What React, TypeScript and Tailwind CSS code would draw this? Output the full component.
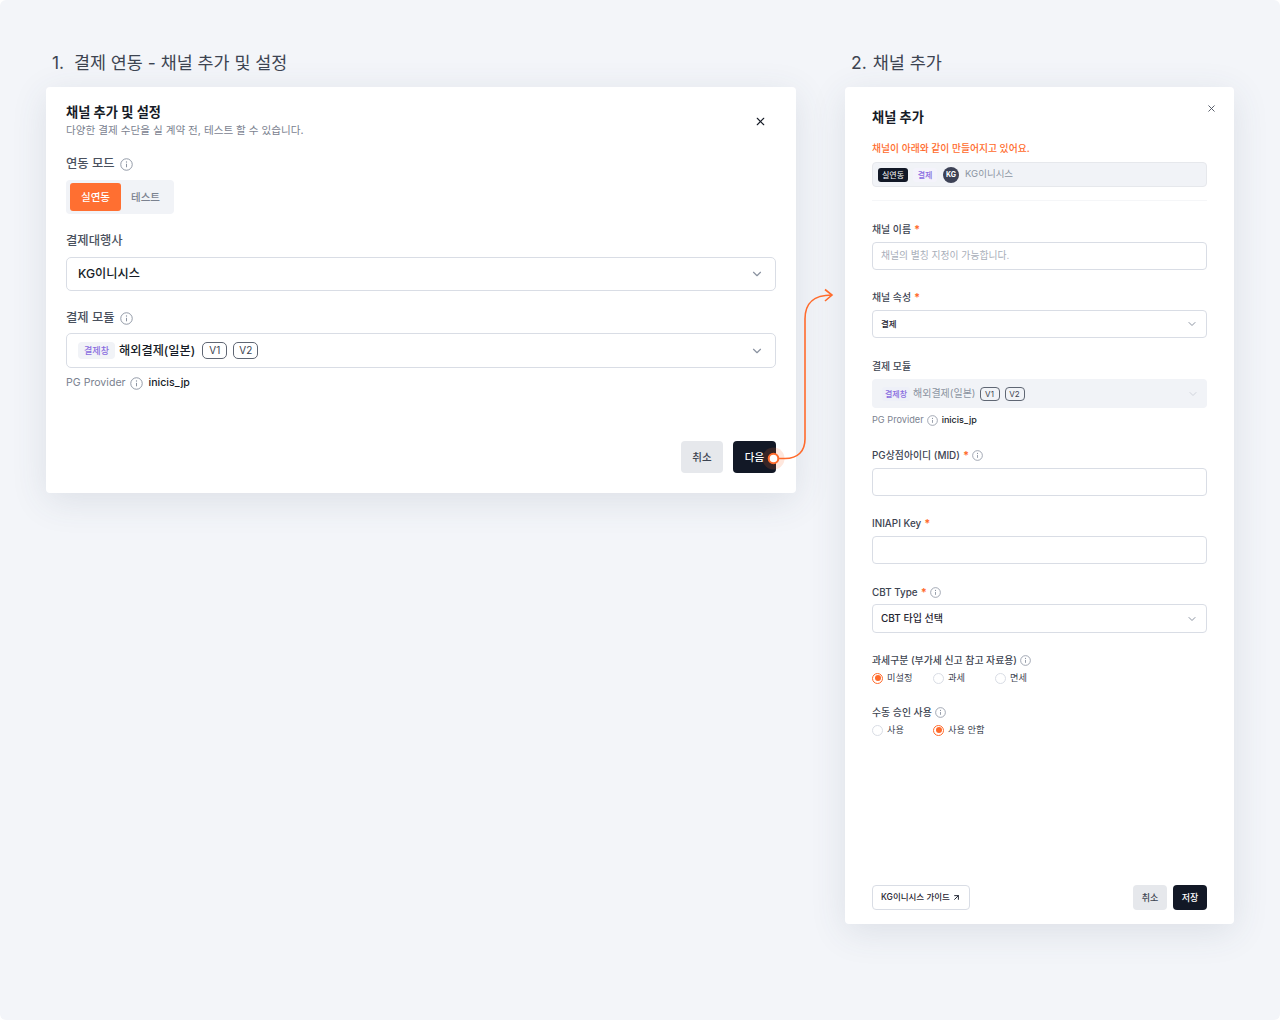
import React from "react";
import { ChevronDown, X, ArrowUpRight } from "lucide-react";

function InfoIcon({ size = 13 }: { size?: number }) {
  return (
    <svg width={size} height={size} viewBox="0 0 14 14" fill="none" className="shrink-0 text-[#8b93a1]">
      <circle cx="7" cy="7" r="6.2" stroke="currentColor" strokeWidth="1" />
      <path d="M7 6.3V10" stroke="currentColor" strokeWidth="1.1" />
      <circle cx="7" cy="4.3" r="0.7" fill="currentColor" />
    </svg>
  );
}

function Req() {
  return <span className="text-[11px] font-bold text-[#ff6b2c]">*</span>;
}

function Label({ children }: { children: React.ReactNode }) {
  return <div className="flex h-[14px] items-center gap-[3px] text-[9.9px] leading-[14px] font-medium text-[#3d4451]">{children}</div>;
}

function VTag({ children, small }: { children: React.ReactNode; small?: boolean }) {
  return (
    <span className={small ? "flex h-[14px] w-[20px] items-center justify-center rounded-[4px] border border-[#5f6673] text-[8px] text-[#3d4451]" : "flex h-[17px] w-[25px] items-center justify-center rounded-[5px] border border-[#5f6673] text-[10px] text-[#3d4451]"}>
      {children}
    </span>
  );
}

function Radio({ on, label, w }: { on?: boolean; label: string; w: string }) {
  return (
    <div className={`flex items-center gap-[4px] ${w}`}>
      {on ? (
        <span className="flex h-[11px] w-[11px] items-center justify-center rounded-full border border-[#ff6b2c]">
          <span className="h-[6px] w-[6px] rounded-full bg-[#ff6b2c]" />
        </span>
      ) : (
        <span className="h-[11px] w-[11px] rounded-full border border-[#d9dde5]" />
      )}
      <span className="text-[9.2px] leading-[12px] text-[#3d4451]">{label}</span>
    </div>
  );
}

function SmallInput({ children }: { children?: React.ReactNode }) {
  return (
    <div className="mt-[6px] flex h-[28px] items-center rounded-[4px] border border-[#d9dde5] bg-white px-[8px] text-[10px] font-medium text-[#1f2430]">
      {children}
    </div>
  );
}

export default function App() {
  return (
    <div
      className="relative flex h-[1020px] w-[1280px] items-start gap-[49px] overflow-hidden rounded-[6px] bg-[#f3f5f9] pt-[51px] pl-[46px] text-[#161b26]"
      style={{ fontFamily: 'Inter, "Noto Sans CJK KR", "Noto Sans", sans-serif' }}
    >
      {/* step 1 */}
      <div className="w-[750px]">
        <h2 className="pl-[6px] text-[17.4px] leading-[24px] font-normal text-[#3d4451]"><span className="mr-[5px]">1.</span> 결제 연동 - 채널 추가 및 설정</h2>
        <div className="mt-[12px] h-[406px] rounded-[4px] bg-white px-[20px] pt-[16px] shadow-[0_8px_36px_rgba(60,70,100,0.12)]">
          <div className="flex justify-between">
            <div>
              <div className="text-[13.2px] leading-[18px] font-semibold text-[#161b26]">채널 추가 및 설정</div>
              <div className="mt-[2px] text-[10.6px] leading-[16px] text-[#7b8290]">다양한 결제 수단을 실 계약 전, 테스트 할 수 있습니다.</div>
            </div>
            <X size={13} strokeWidth={2} className="mt-[12px] mr-[9px] text-[#161b26]" />
          </div>
          <div className="mt-[15px] flex items-center gap-[5px] text-[12.3px] leading-[20px] font-medium text-[#4a515e]">
            연동 모드 <InfoIcon />
          </div>
          <div className="mt-[6px] flex h-[34px] w-[108px] items-center rounded-[4px] bg-[#f1f3f7] px-[4px]">
            <div className="flex h-[28px] w-[51px] items-center justify-center rounded-[3px] bg-[#ff6f31] pt-[1px] text-[10.5px] font-medium text-white">실연동</div>
            <div className="flex h-[28px] w-[49px] items-center justify-center pt-[1px] text-[10.5px] font-medium text-[#7b8290]">테스트</div>
          </div>
          <div className="mt-[17px] text-[12.3px] leading-[20px] font-medium text-[#4a515e]">결제대행사</div>
          <div className="mt-[6px] flex h-[34px] items-center justify-between rounded-[5px] border border-[#d9dde5] pr-[11px] pl-[11px] text-[12.2px] font-medium text-[#161b26]">
            KG이니시스
            <ChevronDown size={14} className="text-[#8b93a1]" />
          </div>
          <div className="mt-[17px] flex items-center gap-[5px] text-[12.3px] leading-[20px] font-medium text-[#4a515e]">
            결제 모듈 <InfoIcon />
          </div>
          <div className="mt-[5px] flex h-[35px] items-center rounded-[5px] border border-[#d9dde5] pr-[11px] pl-[11px]">
            <span className="flex h-[17px] w-[37px] items-center justify-center rounded-[4px] bg-[#f1f3f7] text-[9px] font-medium text-[#8a6de0]">결제창</span>
            <span className="ml-[4px] pt-[1px] text-[12.2px] font-medium text-[#161b26]">해외결제(일본)</span>
            <span className="ml-[7px]"><VTag>V1</VTag></span>
            <span className="ml-[6px]"><VTag>V2</VTag></span>
            <ChevronDown size={14} className="ml-auto text-[#8b93a1]" />
          </div>
          <div className="mt-[7px] flex items-center gap-[4px] text-[10.6px] leading-[16px] text-[#7b8290]">
            PG Provider <InfoIcon />
            <span className="ml-[2px] font-medium text-[#161b26]">inicis_jp</span>
          </div>
          <div className="mt-[50px] flex justify-end gap-[10px]">
            <div className="flex h-[32px] w-[42px] items-center justify-center rounded-[4px] bg-[#e6e8ec] pt-[1px] text-[10.5px] font-medium text-[#3d4451]">취소</div>
            <div className="flex h-[32px] w-[43px] items-center justify-center rounded-[4px] bg-[#121826] pt-[1px] text-[10.5px] font-medium text-white">다음</div>
          </div>
        </div>
      </div>

      {/* step 2 */}
      <div className="w-[389px]">
        <h2 className="pl-[6px] text-[17.5px] leading-[24px] font-normal text-[#3d4451]"><span className="mr-[1px]">2.</span> 채널 추가</h2>
        <div className="relative mt-[12px] h-[837px] rounded-[4px] bg-white px-[27px] pt-[21px] shadow-[0_8px_36px_rgba(60,70,100,0.12)]">
          <X size={11} className="absolute top-[16px] right-[17px] text-[#4a515e]" />
          <div className="text-[13.2px] leading-[18px] font-semibold text-[#161b26]">채널 추가</div>
          <div className="mt-[16px] text-[9.8px] leading-[14px] font-medium text-[#ff6b2c]">채널이 아래와 같이 만들어지고 있어요.</div>
          <div className="mt-[6px] flex h-[25px] items-center rounded-[4px] border border-[#e6e8ec] bg-[#f1f3f7] pl-[5px]">
            <span className="flex h-[14px] w-[30px] items-center justify-center rounded-[3px] bg-[#121826] text-[8px] text-white">실연동</span>
            <span className="ml-[5px] flex h-[14px] w-[24px] items-center justify-center rounded-[3px] bg-[#f4f3fb] text-[8px] font-medium text-[#8a6de0]">결제</span>
            <span className="ml-[6px] flex h-[16px] w-[16px] items-center justify-center rounded-full bg-[#3d4256] text-[7px] leading-none font-bold text-white">KG</span>
            <span className="ml-[6px] text-[9.5px] text-[#8b93a1]">KG이니시스</span>
          </div>
          <div className="mt-[13px] h-px bg-[#f5f6f8]" />

          <div className="mt-[21px]"><Label>채널 이름 <Req /></Label></div>
          <SmallInput><span className="pt-[1px] text-[9.8px] font-normal text-[#a8aeb9]">채널의 별칭 지정이 가능합니다.</span></SmallInput>

          <div className="mt-[20px]"><Label>채널 속성 <Req /></Label></div>
          <SmallInput>
            <span className="text-[8.5px]">결제</span>
            <ChevronDown size={12} className="ml-auto text-[#8b93a1]" />
          </SmallInput>

          <div className="mt-[21px]"><Label>결제 모듈</Label></div>
          <div className="mt-[6px] flex h-[29px] items-center rounded-[4px] bg-[#f1f3f7] pr-[8px] pl-[10px]">
            <span className="flex h-[14px] w-[28px] items-center justify-center rounded-[3px] bg-[#eef0f8] text-[8px] font-medium text-[#8a6de0]">결제창</span>
            <span className="ml-[3px] text-[10px] text-[#8b93a1]">해외결제(일본)</span>
            <span className="ml-[4px]"><VTag small>V1</VTag></span>
            <span className="ml-[5px]"><VTag small>V2</VTag></span>
            <ChevronDown size={12} className="ml-auto text-[#d0d4dc]" />
          </div>
          <div className="mt-[5px] flex items-center gap-[3px] text-[9.2px] leading-[14px] text-[#7b8290]">
            PG Provider <InfoIcon size={11} />
            <span className="ml-[1px] text-[9px] font-medium text-[#161b26]">inicis_jp</span>
          </div>

          <div className="mt-[21px]"><Label>PG상점아이디 (MID) <Req /> <InfoIcon size={11} /></Label></div>
          <SmallInput />

          <div className="mt-[20px]"><Label>INIAPI Key <Req /></Label></div>
          <SmallInput />

          <div className="mt-[21px]"><Label>CBT Type <Req /> <InfoIcon size={11} /></Label></div>
          <div className="mt-[5px] flex h-[29px] items-center rounded-[4px] border border-[#d9dde5] bg-white px-[8px] text-[10px] font-medium text-[#1f2430]">
            CBT 타입 선택
            <ChevronDown size={12} className="ml-auto text-[#8b93a1]" />
          </div>

          <div className="mt-[20px]"><Label>과세구분 (부가세 신고 참고 자료용) <InfoIcon size={11} /></Label></div>
          <div className="mt-[5px] flex h-[12px]">
            <Radio on label="미설정" w="w-[61px]" />
            <Radio label="과세" w="w-[62px]" />
            <Radio label="면세" w="w-[60px]" />
          </div>

          <div className="mt-[21px]"><Label>수동 승인 사용 <InfoIcon size={11} /></Label></div>
          <div className="mt-[5px] flex h-[12px]">
            <Radio label="사용" w="w-[61px]" />
            <Radio on label="사용 안함" w="w-[80px]" />
          </div>

          <div className="absolute right-[27px] bottom-[14px] left-[27px] flex items-center">
            <div className="flex h-[25px] items-center gap-[2px] rounded-[4px] border border-[#d9dde5] bg-white px-[8px] text-[8.5px] font-medium text-[#1f2430]">
              KG이니시스 가이드 <ArrowUpRight size={9} strokeWidth={2.6} />
            </div>
            <div className="ml-auto flex h-[25px] w-[34px] items-center justify-center rounded-[4px] bg-[#e6e8ec] text-[9px] font-medium text-[#3d4451]">취소</div>
            <div className="ml-[6px] flex h-[25px] w-[34px] items-center justify-center rounded-[4px] bg-[#121826] text-[9px] font-medium text-white">저장</div>
          </div>
        </div>
      </div>

      {/* connector between the two steps */}
      <svg className="absolute top-0 left-0" width="1280" height="1020" fill="none">
        <path d="M774 458.5H785C798 458.5 805 451 805 439V319C805 304 812 295 832 295" stroke="#ff6b2c" strokeWidth="1.6" />
        <path d="M825 289.5L832 295L825 301" stroke="#ff6b2c" strokeWidth="1.6" />
        <circle cx="773.5" cy="458.5" r="11" fill="#ff6b2c" opacity="0.16" />
        <circle cx="773.5" cy="458.5" r="4.8" fill="white" stroke="#ff6b2c" strokeWidth="2" />
      </svg>
    </div>
  );
}
